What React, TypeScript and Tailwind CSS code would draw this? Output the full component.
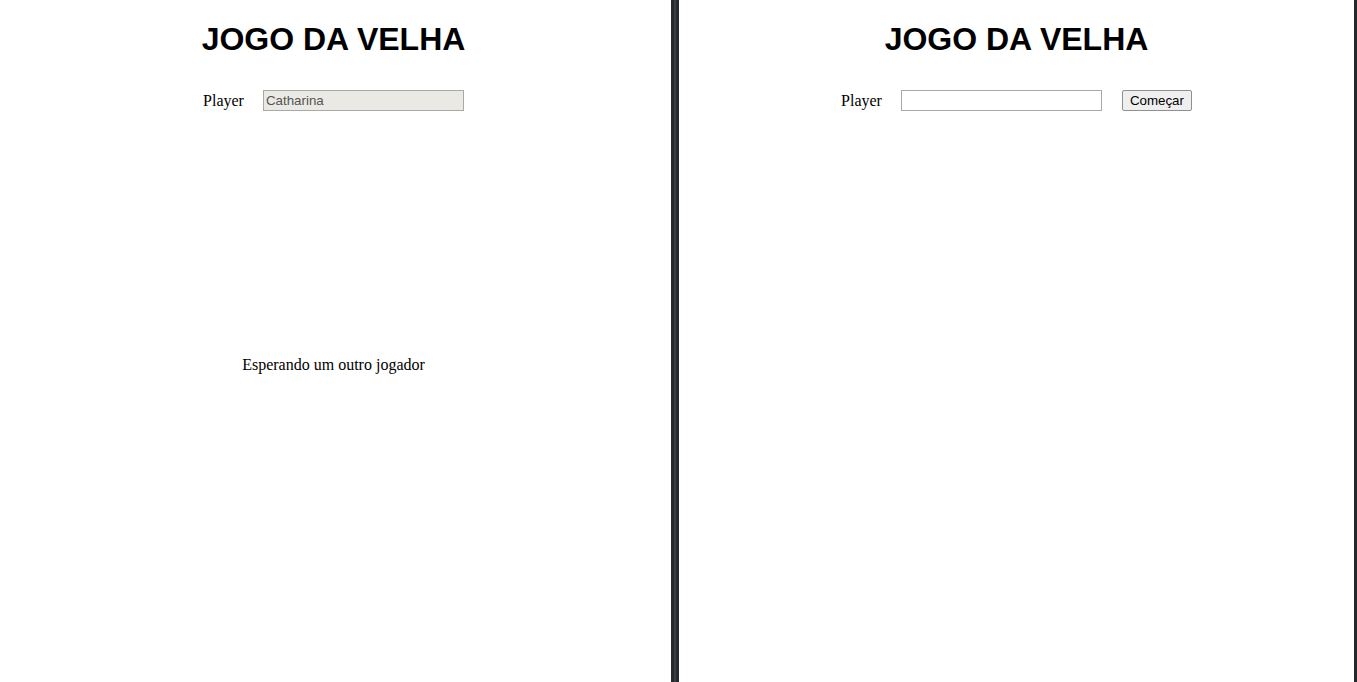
import React from "react";

function Title() {
  return (
    <h1 className="mt-[21px] text-[32px] leading-[37px] font-bold text-black font-['Liberation_Sans',Arial,sans-serif]">
      JOGO DA VELHA
    </h1>
  );
}

function WaitingPanel() {
  return (
    <div className="flex w-[671px] flex-col items-center bg-white pr-[4px]">
      <Title />
      <div className="mt-[32px] flex h-[21px] items-center gap-[19px]">
        <span className="text-[16px] font-['Liberation_Serif',serif] text-black">Player</span>
        <input
          disabled
          value="Catharina"
          readOnly
          className="h-[21px] w-[201px] border border-[#a9a9a9] bg-[#eae9e3] px-[2px] text-[13.33px] text-[#545454] font-['Liberation_Sans',Arial,sans-serif] outline-none"
        />
      </div>
      <p className="mt-[245px] text-[16px] leading-[18px] text-black font-['Liberation_Serif',serif]">
        Esperando um outro jogador
      </p>
    </div>
  );
}

function StartPanel() {
  return (
    <div className="flex flex-1 flex-col items-center bg-white">
      <Title />
      <div className="mt-[32px] flex h-[21px] items-center">
        <span className="text-[16px] font-['Liberation_Serif',serif] text-black">Player</span>
        <input
          defaultValue=""
          className="ml-[19px] h-[21px] w-[201px] border border-[#a9a9a9] bg-white px-[2px] text-[13.33px] font-['Liberation_Sans',Arial,sans-serif] outline-none"
        />
        <button className="ml-[20px] h-[21px] w-[70px] rounded-[2px] border border-[#8f8f8f] bg-[#efefef] text-[13.33px] text-black font-['Liberation_Sans',Arial,sans-serif]">
          Começar
        </button>
      </div>
    </div>
  );
}

export default function App() {
  return (
    <div className="flex h-[682px] w-[1357px] overflow-hidden bg-white">
      <WaitingPanel />
      {/* window split */}
      <div className="flex w-[8px]">
        <div className="w-[3px] bg-[#22282c]" />
        <div className="w-[2px] bg-[#3b3e42]" />
        <div className="w-[3px] bg-[#22282c]" />
      </div>
      <StartPanel />
      <div className="w-[3px] bg-[#22282c]" />
    </div>
  );
}
